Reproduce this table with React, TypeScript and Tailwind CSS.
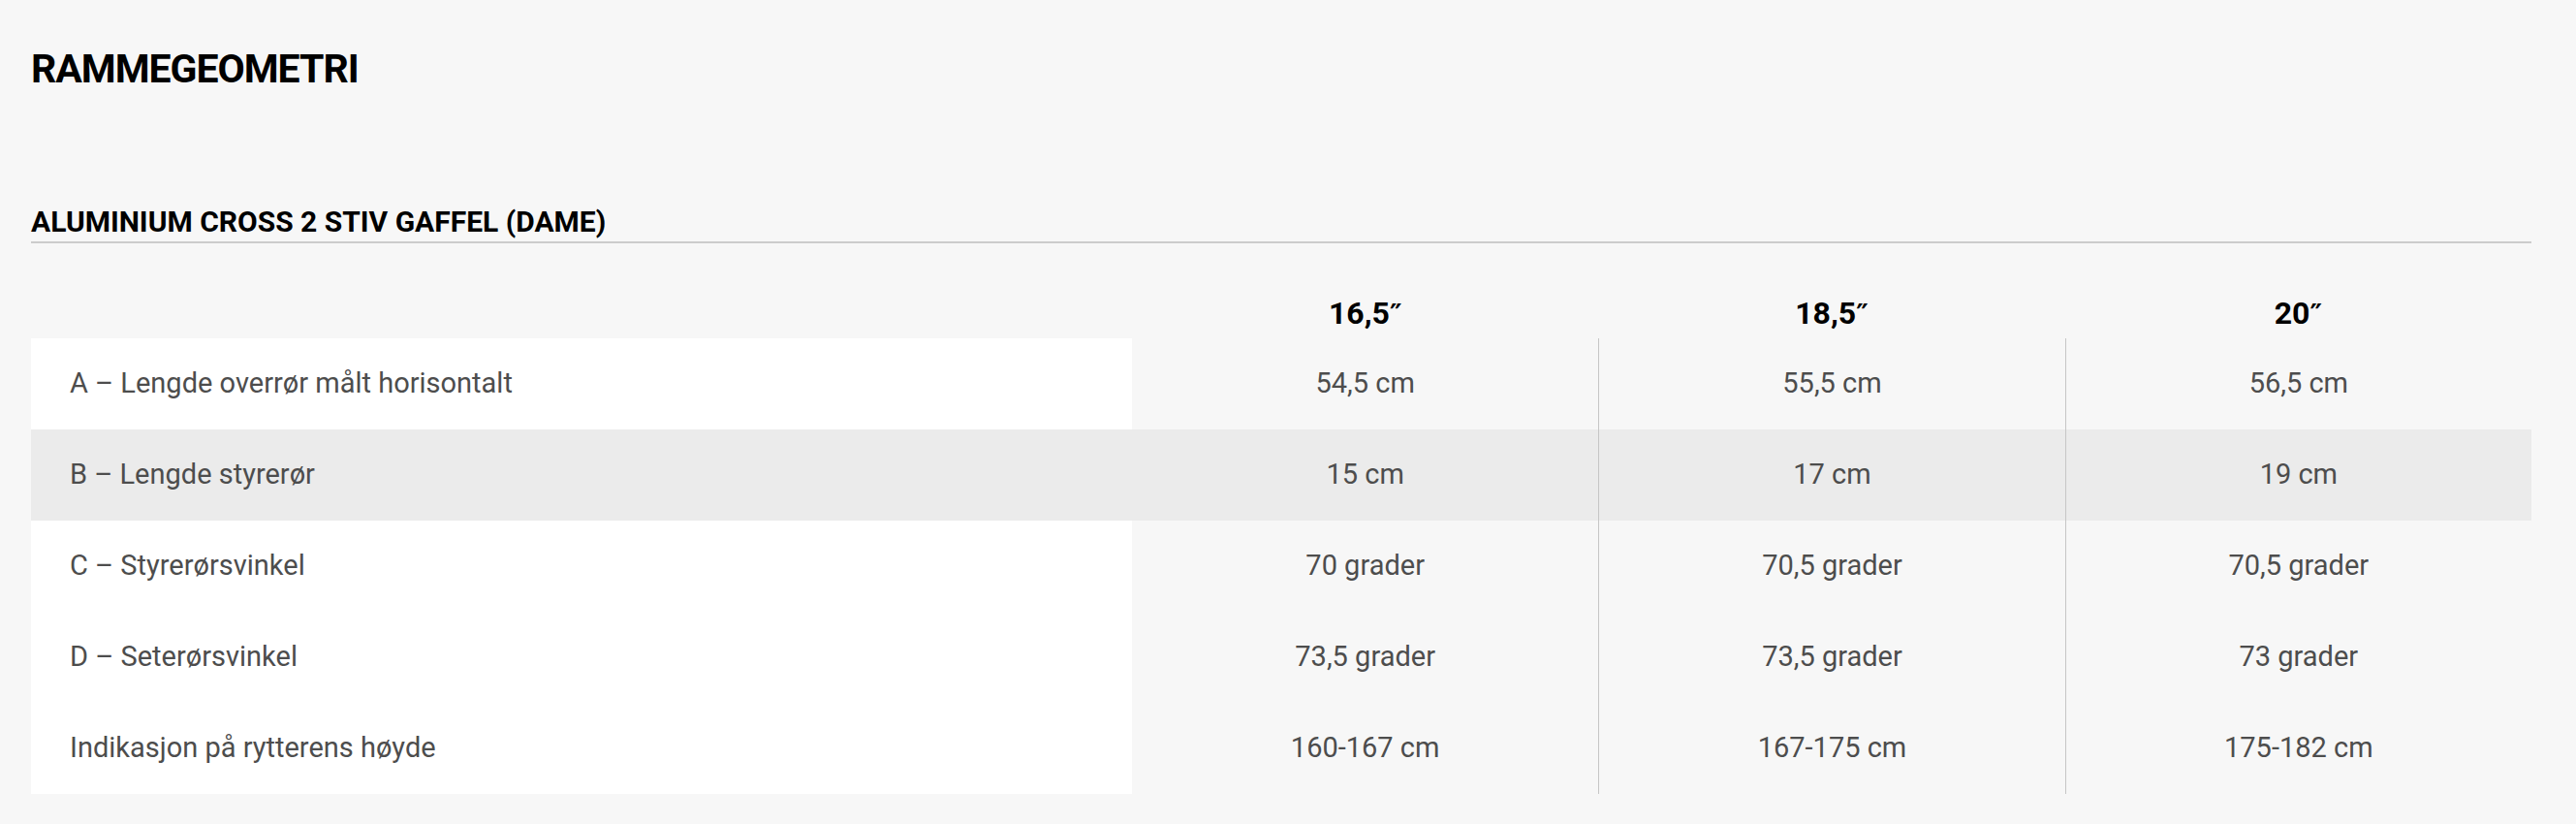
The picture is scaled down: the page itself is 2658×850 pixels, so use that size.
const sizes = ["16,5", "18,5", "20"];

const rows = [
  { label: "A – Lengde overrør målt horisontalt", values: ["54,5 cm", "55,5 cm", "56,5 cm"] },
  { label: "B – Lengde styrerør", values: ["15 cm", "17 cm", "19 cm"] },
  { label: "C – Styrerørsvinkel", values: ["70 grader", "70,5 grader", "70,5 grader"] },
  { label: "D – Seterørsvinkel", values: ["73,5 grader", "73,5 grader", "73 grader"] },
  { label: "Indikasjon på rytterens høyde", values: ["160-167 cm", "167-175 cm", "175-182 cm"] },
];

export default function App() {
  return (
    <div className="min-h-[850px] bg-[#f7f7f7] pl-[32px] pr-[46px] pt-[51px] font-['Roboto',_'Liberation_Sans',_sans-serif]">
      <h2 className="text-[41px] font-bold leading-none tracking-tight text-black">RAMMEGEOMETRI</h2>

      <h3 className="mt-[122px] border-b-2 border-[#cccccc] pb-[5px] text-[30px] font-bold leading-none text-black">
        ALUMINIUM CROSS 2 STIV GAFFEL (DAME)
      </h3>

      <div className="grid grid-cols-[1136px_1fr_1fr_1fr] pt-[56px] pb-[10px]">
        <div />
        {sizes.map((s) => (
          <div key={s} className="text-center text-[32px] font-bold leading-none text-black">
            {s}
            <span className="font-['DejaVu_Sans',_sans-serif] text-[28px]">″</span>
          </div>
        ))}
      </div>

      <div>
        {rows.map((row, i) => {
          const gray = i === 1;
          return (
            <div
              key={row.label}
              className={`grid h-[94px] grid-cols-[1136px_1fr_1fr_1fr] text-[29px] text-[#4d4d4d] ${gray ? "bg-[#ebebeb]" : ""}`}
            >
              <div className={`flex items-center pl-[40px] ${gray ? "" : "bg-white"}`}>{row.label}</div>
              {row.values.map((v, j) => (
                <div
                  key={j}
                  className={`flex items-center justify-center ${j > 0 ? "border-l border-[#c6c6c6]" : ""}`}
                >
                  {v}
                </div>
              ))}
            </div>
          );
        })}
      </div>
    </div>
  );
}
